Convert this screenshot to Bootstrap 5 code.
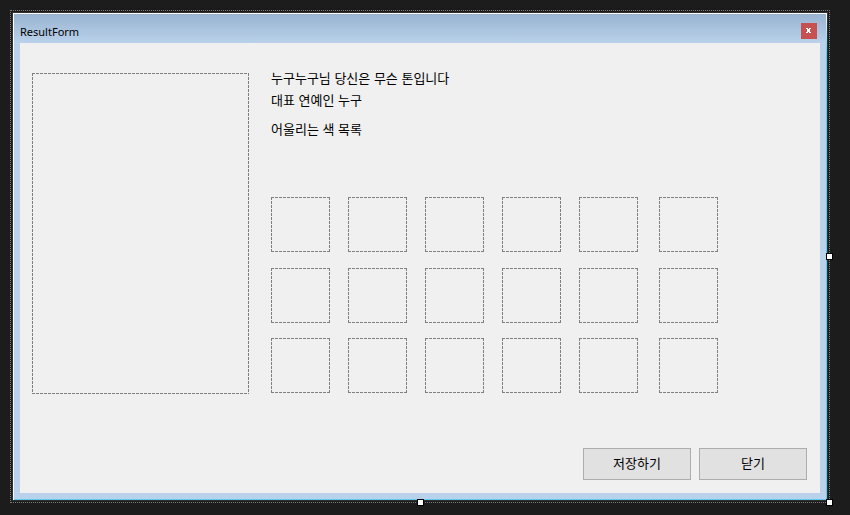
<!DOCTYPE html>
<html lang="ko">
<head>
<meta charset="utf-8">
<meta name="viewport" content="width=device-width, initial-scale=1">
<title>ResultForm</title>
<link href="https://cdn.jsdelivr.net/npm/bootstrap@5.3.0/dist/css/bootstrap.min.css" rel="stylesheet">
<style>
  body { background: #1c1c1c; color: #000; font: 13px/12px "Liberation Sans", "Noto Sans CJK KR", sans-serif; padding: 10px 20px 12px 10px; }
  .designer { border: 1px dotted #7c7c7c; padding: 2px; }
  .form-window {
    padding: 1px;
    background:
      linear-gradient(#fff, #fff) 0 0 / 100% 1px no-repeat,
      linear-gradient(#fff, #f4f8fa) 0 0 / 1px 100% no-repeat,
      linear-gradient(#fff, #4fd0ee 40px) 100% 0 / 1px 100% no-repeat,
      linear-gradient(#5ccbea, #5ccbea) 0 100% / 100% 1px no-repeat;
    box-shadow: 0 0 0 1px #303030;
  }
  .form-chrome { background: linear-gradient(#99b4d1, #b9d1ea 29px); padding: 0 6px 6px; }
  .title-bar { height: 29px; padding: 9px 3px 4px 0; }
  .title-text { font: 11px/18px "Noto Sans", sans-serif; }
  .close-btn { width: 16px; height: 16px; background: #c75050; border: 0; }
  .client { background: #f0f0f0; padding: 30px 13px 13px 12px; gap: 54px; }
  .body-row { gap: 22px; }
  .picture, .swatch {
    background:
      repeating-linear-gradient(90deg, #808080 0 3px, transparent 3px 4px) 0 0 / 100% 1px no-repeat,
      repeating-linear-gradient(90deg, #808080 0 3px, transparent 3px 4px) 0 100% / 100% 1px no-repeat,
      repeating-linear-gradient(#808080 0 3px, transparent 3px 4px) 0 0 / 1px 100% no-repeat,
      repeating-linear-gradient(#808080 0 3px, transparent 3px 4px) 100% 0 / 1px 100% no-repeat;
  }
  .picture { width: 217px; min-height: 321px; }
  .labels { gap: 10px; }
  .list-label { margin-top: 7px; }
  .swatches { display: grid; grid-template-columns: repeat(5, 59px) 62px; grid-template-rows: 56px 55px 55px; gap: 15px 18px; padding-bottom: 1px; }
  .swatch { width: 59px; height: 55px; }
  .swatch:nth-child(6n) { justify-self: end; }
  .form-btn { width: 108px; height: 32px; background: #e1e1e1; border: 1px solid #adadad; color: #000; }
  .handle { width: 7px; height: 7px; background: #fff; border: 1px solid #000; }
  .handle-e { right: -4px; top: calc(50% - 4px); }
  .handle-s { bottom: -4px; left: calc(50% - 3px); }
  .handle-se { right: -4px; bottom: -4px; }
</style>
<script src="https://cdn.jsdelivr.net/npm/bootstrap@5.3.0/dist/js/bootstrap.bundle.min.js"></script>
</head>
<body>
<div class="designer position-relative">
  <main class="form-window">
    <div class="form-chrome">
      <header class="title-bar d-flex justify-content-between">
        <h1 class="title-text m-0">ResultForm</h1>
        <button type="button" class="close-btn p-0 d-flex align-items-center justify-content-center" aria-label="Close">
          <svg width="6" height="6" viewBox="0 0 6 6" shape-rendering="crispEdges" fill="#fff" aria-hidden="true"><path d="M0 0h2v1h1V0h2v1H4v3h1v1H3V4H2v1H0V4h1V1H0z"/></svg>
        </button>
      </header>
      <div class="client d-flex flex-column">
        <div class="body-row d-flex">
          <div class="picture flex-shrink-0"></div>
          <div class="d-flex flex-column justify-content-between">
            <div class="labels d-flex flex-column">
              <div>누구누구님 당신은 무슨 톤입니다</div>
              <div>대표 연예인 누구</div>
              <div class="list-label">어울리는 색 목록</div>
            </div>
            <div class="swatches">
              <div class="swatch"></div><div class="swatch"></div><div class="swatch"></div><div class="swatch"></div><div class="swatch"></div><div class="swatch"></div>
              <div class="swatch"></div><div class="swatch"></div><div class="swatch"></div><div class="swatch"></div><div class="swatch"></div><div class="swatch"></div>
              <div class="swatch"></div><div class="swatch"></div><div class="swatch"></div><div class="swatch"></div><div class="swatch"></div><div class="swatch"></div>
            </div>
          </div>
        </div>
        <div class="d-flex justify-content-end gap-2">
          <button type="button" class="form-btn p-0">저장하기</button>
          <button type="button" class="form-btn p-0">닫기</button>
        </div>
      </div>
    </div>
  </main>
  <span class="handle handle-e position-absolute"></span>
  <span class="handle handle-s position-absolute"></span>
  <span class="handle handle-se position-absolute"></span>
</div>
</body>
</html>
